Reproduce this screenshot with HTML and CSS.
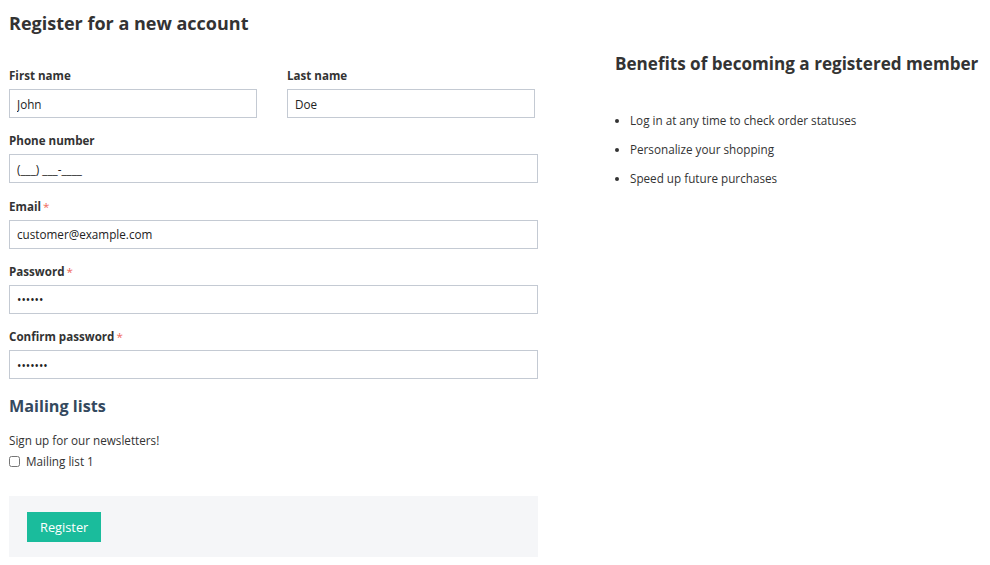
FILE: index.html
```html
<!DOCTYPE html>
<html lang="en">
<head>
<meta charset="utf-8">
<title>Register</title>
<link rel="stylesheet" href="styles.css">
</head>
<body>
<div class="page">
  <div class="main">
    <h1 class="title">Register for a new account</h1>
    <form class="form">
      <div class="row-two">
        <div class="field">
          <label class="label">First name</label>
          <input class="input" type="text" value="John">
        </div>
        <div class="field">
          <label class="label">Last name</label>
          <input class="input" type="text" value="Doe">
        </div>
      </div>
      <div class="field">
        <label class="label">Phone number</label>
        <input class="input" type="text" value="(___) ___-____">
      </div>
      <div class="field">
        <label class="label">Email<span class="req">*</span></label>
        <input class="input" type="text" value="customer@example.com">
      </div>
      <div class="field">
        <label class="label">Password<span class="req">*</span></label>
        <input class="input" type="password" value="123456">
      </div>
      <div class="field">
        <label class="label">Confirm password<span class="req">*</span></label>
        <input class="input" type="password" value="1234567">
      </div>
      <h2 class="sub">Mailing lists</h2>
      <p class="note">Sign up for our newsletters!</p>
      <label class="check"><input class="checkbox" type="checkbox"><span>Mailing list 1</span></label>
      <div class="actions">
        <button class="btn" type="button">Register</button>
      </div>
    </form>
  </div>
  <div class="side">
    <h2 class="side-title">Benefits of becoming a registered member</h2>
    <ul class="benefits">
      <li>Log in at any time to check order statuses</li>
      <li>Personalize your shopping</li>
      <li>Speed up future purchases</li>
    </ul>
  </div>
</div>
</body>
</html>
```
FILE: styles.css
```css
html, body {
  margin: 0;
  background: #fff;
}
body {
  font-family: "Open Sans", "Liberation Sans", sans-serif;
  color: #333;
  font-size: 11.7px;
}
.page {
  display: flex;
  padding: 9px;
  gap: 77px;
}
.main {
  width: 529px;
  flex: none;
}
.title {
  font-size: 18px;
  font-weight: 700;
  line-height: 28px;
  margin: 0 0 29px;
  color: #333;
}
.form {
  display: flex;
  flex-direction: column;
}
.row-two {
  display: grid;
  grid-template-columns: 248px 248px;
  column-gap: 30px;
}
.field {
  display: flex;
  flex-direction: column;
  margin-bottom: 13.25px;
}
.label {
  font-size: 11.6px;
  font-weight: 700;
  line-height: 18px;
  padding-top: 1px;
  margin-bottom: 4px;
  color: #333;
}
.req {
  color: #ef6a5a;
  margin-left: 2px;
  font-weight: 400;
}
.input {
  box-sizing: border-box;
  height: 29px;
  border: 1px solid #c4cad3;
  border-radius: 0;
  padding: 0 7px;
  font-family: inherit;
  font-size: 11.7px;
  color: #222;
  background: #fff;
  outline: none;
  width: 100%;
}
.sub {
  font-size: 16.2px;
  font-weight: 700;
  line-height: 24px;
  margin: 2px 0 12px;
  color: #34495e;
}
.note {
  margin: 0;
  line-height: 20px;
}
.check {
  display: flex;
  align-items: center;
  gap: 6px;
  line-height: 22px;
}
.checkbox {
  width: 11px;
  height: 11px;
  margin: 0;
}
.actions {
  margin-top: 24px;
  background: #f5f6f8;
  padding: 16px 18px 15px;
  height: 61px;
  box-sizing: border-box;
}
.btn {
  background: #1abc9c;
  color: #fff;
  border: 0;
  border-radius: 0;
  height: 30px;
  padding: 0 13px;
  font-family: inherit;
  font-size: 12.8px;
}
.side {
  flex: 1;
  padding-top: 42px;
}
.side-title {
  font-size: 17.1px;
  font-weight: 700;
  line-height: 26px;
  margin: 0 0 33px;
  color: #333;
  white-space: nowrap;
}
.benefits {
  margin: 0;
  padding-left: 15px;
  list-style: disc;
}
.benefits li {
  line-height: 20px;
  margin-bottom: 9px;
}
```
